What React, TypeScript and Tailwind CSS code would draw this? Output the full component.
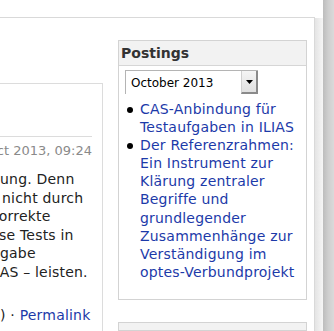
import React from 'react';

const posts = [
  { lines: ['CAS-Anbindung für', 'Testaufgaben in ILIAS'] },
  {
    lines: [
      'Der Referenzrahmen:',
      'Ein Instrument zur',
      'Klärung zentraler',
      'Begriffe und',
      'grundlegender',
      'Zusammenhänge zur',
      'Verständigung im',
      'optes-Verbundprojekt',
    ],
  },
];

const MonthSelect = () => (
  <div className="mt-[4px] ml-[6px] w-[133px] h-[24px] flex bg-white border border-[#b4b4b4] border-r-0 border-b-0">
    <div className="flex-1 flex items-center pl-[5px] text-[12px] text-black">October 2013</div>
    <div className="w-[17px] flex items-center justify-center bg-gradient-to-b from-[#f5f5f5] to-[#e0e0e0] border-l border-[#d0d0d0] border-r-2 border-b-2 border-r-[#8a8a8a] border-b-[#8a8a8a]">
      <svg width="7" height="4" viewBox="0 0 7 4">
        <path d="M0 0 H7 L3.5 4 Z" fill="#000" />
      </svg>
    </div>
  </div>
);

export default function App() {
  return (
    <div className="w-[334px] h-[331px] overflow-hidden bg-white flex font-['DejaVu_Sans',Verdana,sans-serif] text-[14px] text-[#222]">
      {/* page */}
      <div className="w-[315px] shrink-0 flex flex-col">
        <div className="h-[17px] shrink-0" />
        <div className="flex-1 border-t border-r border-[#d9d9d9] flex gap-[15px]">
          {/* entry column, cut off on the left */}
          <div className="w-[103px] shrink-0 pt-[65px] overflow-hidden">
            <div className="h-full border-t border-r border-[#dcdcdc] pr-[10px]">
              <div className="h-[53px] border-b border-[#dcdcdc]" />
              <div className="mt-[5px] h-[18px] leading-[18px] flex justify-end whitespace-nowrap text-[13px] text-[#8a8a8a]">
                17. Oct 2013, 09:24
              </div>
              <div className="mt-[10px] leading-[18.5px] whitespace-nowrap tracking-[0.2px]">
                <div>ung. Denn</div>
                <div className="pl-[2px]">nicht durch</div>
                <div className="-ml-[9px]">korrekte</div>
                <div className="-ml-[1px]">se Tests in</div>
                <div>gabe</div>
                <div className="-ml-[17px]">ILIAS – leisten.</div>
              </div>
              <div className="mt-[25px] leading-[18.5px] whitespace-nowrap tracking-[0.2px]">
                ) · <span className="text-[#1c3aa9]">Permalink</span>
              </div>
            </div>
          </div>

          {/* sidebar */}
          <div className="w-[189px] shrink-0 pt-[22px] flex flex-col">
            <div className="border border-[#d3d3d3]">
              <div className="h-[25px] bg-[#f2f2f2] border-b border-[#d6d6d6] flex items-center pl-[2px] font-bold text-[#333]">
                Postings
              </div>
              <MonthSelect />
              <ul className="mt-[6px] pb-[18px] leading-[18.1px] text-[#1c3aa9] tracking-[0.2px]">
                {posts.map((p, i) => (
                  <li key={i} className="flex items-start">
                    <span className="ml-[8px] mt-[7px] w-[6px] h-[6px] rounded-full bg-black shrink-0" />
                    <span className="ml-[7px] whitespace-nowrap">
                      {p.lines.map((l, j) => (
                        <div key={j}>{l}</div>
                      ))}
                    </span>
                  </li>
                ))}
              </ul>
            </div>
            <div className="mt-[22px] flex-1 border border-[#d3d3d3] bg-[#f2f2f2]" />
          </div>
        </div>
      </div>

      {/* window edge */}
      <div className="w-[8px] shrink-0 mt-[18px] bg-gradient-to-r from-[#e4e4e4] to-[#f6f6f6]" />
      <div className="flex-1 bg-gradient-to-r from-[#bdbdbd] via-[#cfcfcf] to-[#dadada]" />
    </div>
  );
}
